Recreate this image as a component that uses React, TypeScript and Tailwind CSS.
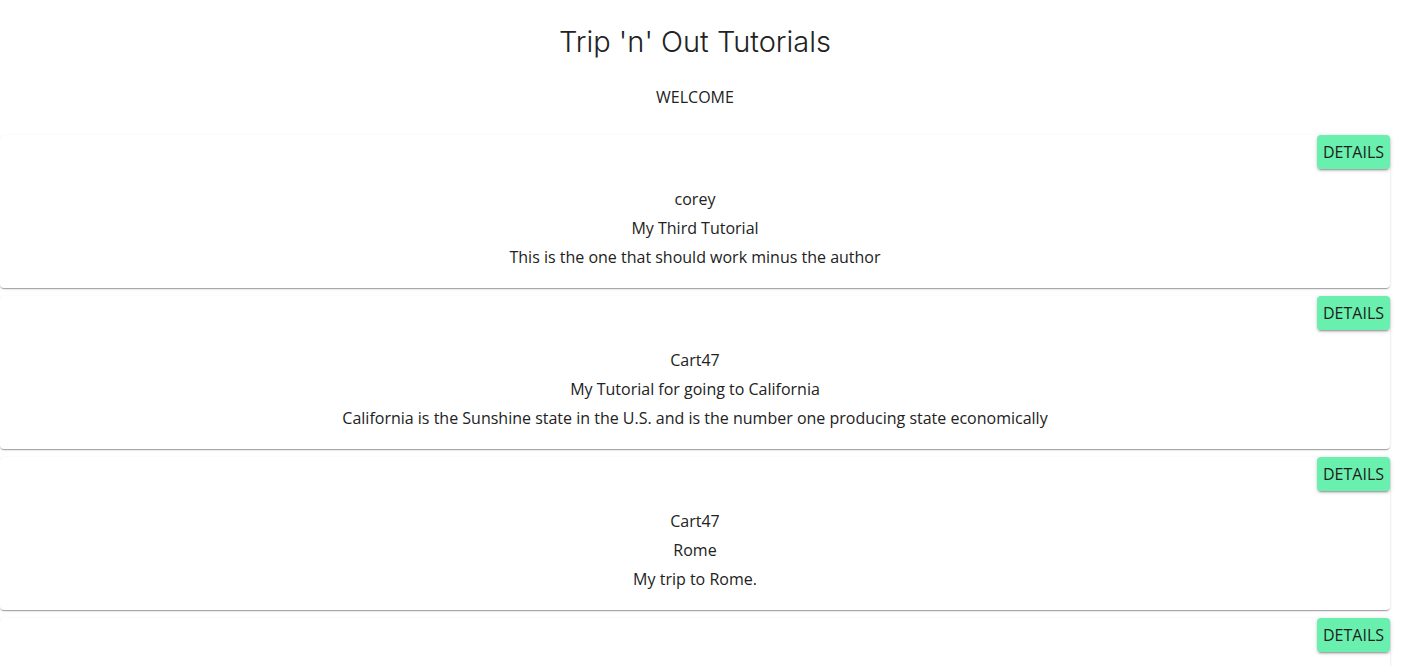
const tutorials = [
  { author: 'corey', title: 'My Third Tutorial', body: 'This is the one that should work minus the author' },
  { author: 'Cart47', title: 'My Tutorial for going to California', body: 'California is the Sunshine state in the U.S. and is the number one producing state economically' },
  { author: 'Cart47', title: 'Rome', body: 'My trip to Rome.' },
  { author: 'Cart47', title: 'Paris', body: 'Notes from Paris.' },
];

function TutorialCard({ author, title, body }: { author: string; title: string; body: string }) {
  return (
    <div className="bg-white rounded-[4px] mb-2 shadow-[0_2px_1px_-1px_rgba(0,0,0,0.2),0_1px_1px_0_rgba(0,0,0,0.14),0_1px_3px_0_rgba(0,0,0,0.12)]">
      <div className="flex justify-end">
        <button
          type="button"
          className="h-[34px] w-[73px] bg-[#69f0ae] text-[16px] text-[#1d1d1d] rounded-[4px] shadow-[0_3px_1px_-2px_rgba(0,0,0,0.2),0_2px_2px_0_rgba(0,0,0,0.14),0_1px_5px_0_rgba(0,0,0,0.12)]"
        >
          DETAILS
        </button>
      </div>
      <div className="pt-4 pb-4 text-center text-[16px] leading-[29px] text-[#222]">
        <p>{author}</p>
        <p>{title}</p>
        <p>{body}</p>
      </div>
    </div>
  );
}

export default function App() {
  return (
    <div className="w-[1390px] bg-white font-['Open_Sans',sans-serif] text-[#222]">
      <h1 className="pt-[23px] text-center text-[29px] leading-[38px] font-light font-['Inter',sans-serif] text-[#222]">
        Trip 'n' Out Tutorials
      </h1>
      <p className="mt-[25px] mb-[27px] text-center text-[16px] leading-[22px]">WELCOME</p>
      <div>
        {tutorials.map((t, i) => (
          <TutorialCard key={i} {...t} />
        ))}
      </div>
    </div>
  );
}
